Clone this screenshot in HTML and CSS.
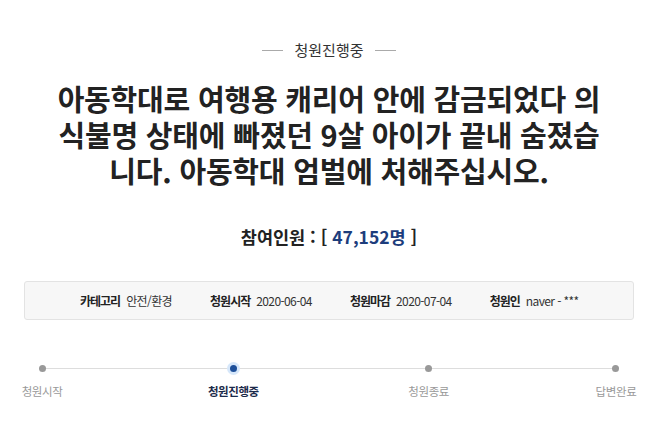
FILE: index.html
```html
<!DOCTYPE html>
<html lang="ko">
<head>
<meta charset="utf-8">
<link rel="stylesheet" href="styles.css">
</head>
<body>
<div class="page">
  <div class="status"><span class="dash"></span><span class="status-text">청원진행중</span><span class="dash"></span></div>
  <h1 class="title">아동학대로 여행용 캐리어 안에 감금되었다 의<br>식불명 상태에 빠졌던 9살 아이가 끝내 숨졌습<br>니다. 아동학대 엄벌에 처해주십시오.</h1>
  <div class="count">참여인원 : [ <span class="num">47,152명</span> ]</div>
  <div class="info">
    <div class="item"><span class="label">카테고리</span><span class="value">안전/환경</span></div>
    <div class="item"><span class="label">청원시작</span><span class="value">2020-06-04</span></div>
    <div class="item"><span class="label">청원마감</span><span class="value">2020-07-04</span></div>
    <div class="item"><span class="label">청원인</span><span class="value">naver - ***</span></div>
  </div>
  <div class="steps">
    <div class="step"><span class="dot"></span><span class="step-label">청원시작</span></div>
    <div class="step active"><span class="dot"></span><span class="step-label">청원진행중</span></div>
    <div class="step"><span class="dot"></span><span class="step-label">청원종료</span></div>
    <div class="step"><span class="dot"></span><span class="step-label">답변완료</span></div>
  </div>
</div>
</body>
</html>
```
FILE: styles.css
```css
html, body {
  margin: 0;
  padding: 0;
  background: #fff;
}
body {
  font-family: "Noto Sans CJK KR", "Noto Sans", sans-serif;
  color: #222;
}
.page {
  width: 658px;
  padding-top: 40px;
}
.status {
  display: flex;
  justify-content: center;
  align-items: center;
  gap: 11px;
  height: 20px;
  font-size: 15px;
  color: #333;
}
.status-text {
  line-height: 20px;
}
.dash {
  width: 21px;
  height: 1px;
  background: #aaa;
}
.title {
  margin: 20px 0 0;
  text-align: center;
  font-size: 29px;
  font-weight: 700;
  line-height: 36px;
  letter-spacing: -0.2px;
  color: #222;
}
.count {
  margin-top: 37px;
  text-align: center;
  font-size: 17.5px;
  font-weight: 700;
  line-height: 24px;
  color: #222;
}
.num {
  color: #1d3d7c;
}
.info {
  margin: 32px 24px 0;
  height: 37px;
  border: 1px solid #e3e3e3;
  border-radius: 3px;
  background: #f7f7f7;
  display: flex;
  align-items: center;
  padding-left: 55px;
  gap: 38px;
  font-size: 12px;
}
.item {
  display: flex;
  gap: 6px;
  align-items: center;
}
.label {
  font-weight: 700;
  color: #222;
  letter-spacing: -1px;
}
.value {
  color: #333;
  letter-spacing: -0.6px;
}
.steps {
  position: relative;
  margin: 45px 20px 0;
  display: flex;
  justify-content: space-between;
}
.steps::before {
  content: "";
  position: absolute;
  left: 22px;
  right: 22px;
  top: 3px;
  height: 1px;
  background: #ddd;
}
.step {
  width: 44px;
  display: flex;
  flex-direction: column;
  align-items: center;
  position: relative;
}
.step:nth-child(3) {
  left: 4px;
}
.dot {
  width: 7px;
  height: 7px;
  border-radius: 50%;
  background: #999;
}
.active .dot {
  background: #1d4f9a;
  box-shadow: 0 0 0 3px #d6e7fa;
}
.step-label {
  margin-top: 10px;
  white-space: nowrap;
  font-size: 11.5px;
  line-height: 18px;
  letter-spacing: -0.4px;
  color: #999;
}
.active .step-label {
  font-weight: 700;
  color: #1b2a4a;
}
```
